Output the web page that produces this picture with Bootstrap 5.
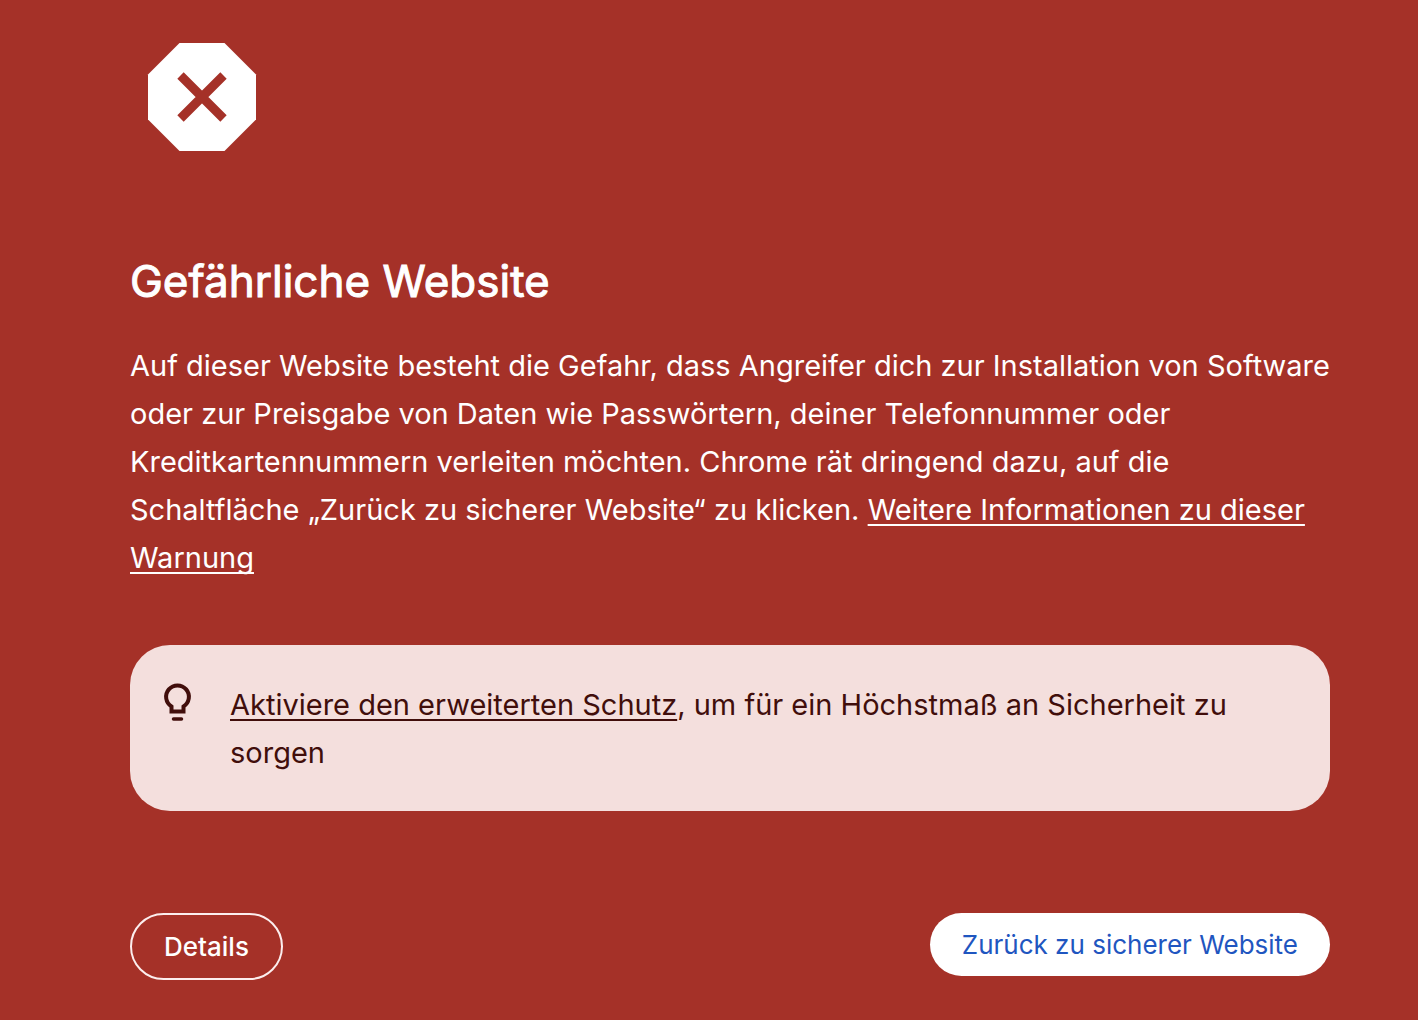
<!DOCTYPE html>
<html lang="de">
<head>
<meta charset="utf-8">
<meta name="viewport" content="width=device-width, initial-scale=1">
<title>Gefährliche Website</title>
<link href="https://cdn.jsdelivr.net/npm/bootstrap@5.3.0/dist/css/bootstrap.min.css" rel="stylesheet">
<style>
body { background: #a53128; color: #fff; font-family: Inter, "Liberation Sans", sans-serif; font-size: 29px; line-height: 48px; }
.warning-page { padding: 25px 88px 40px 130px; }
.stop-icon { width: 144px; height: 144px; }
.warning-title { font-size: 44px; line-height: 56px; font-weight: 400; margin: 84px 0 33px; -webkit-text-stroke: 1px; }
.warning-text { margin-bottom: 63px; }
.warning-page a { text-underline-offset: 4px; text-decoration-thickness: 2px; text-decoration-skip-ink: none; }
.tip-box { background: #f4dfdd; color: #410e0b; border-radius: 40px; padding: 36px 32px 34px; }
.tip-icon { width: 30px; height: 42px; margin-right: 38px; }
.actions { margin-top: 102px; }
.btn-round { border-radius: 40px; font-size: 26px; line-height: 31px; padding: 16px 32px; border: 0; }
.btn-details { border: 2px solid #fceeee; color: #fff; font-weight: 500; }
.btn-back, .btn-back:hover { background: #fff; color: #1f56c0; }
</style>
<script src="https://cdn.jsdelivr.net/npm/bootstrap@5.3.0/dist/js/bootstrap.bundle.min.js"></script>
</head>
<body>
<main class="warning-page">
<svg class="stop-icon d-block" viewBox="0 0 144 144" aria-hidden="true"><path fill="#fff" d="M49.500 18h45L126 49.500v45L94.500 126h-45L18 94.500v-45z"/><path d="m50.500 50.500 43 43m0-43-43 43" stroke="#a53128" stroke-width="9"/></svg>
<h1 class="warning-title">Gefährliche Website</h1>
<p class="warning-text">Auf dieser Website besteht die Gefahr, dass Angreifer dich zur Installation von Software oder zur Preisgabe von Daten wie Passwörtern, deiner Telefonnummer oder Kreditkartennummern verleiten möchten. Chrome rät dringend dazu, auf die Schaltfläche „Zurück zu sicherer Website“ zu klicken. <a class="text-reset" href="#">Weitere Informationen zu dieser Warnung</a></p>
<div class="tip-box d-flex align-items-start">
<svg class="tip-icon flex-shrink-0" viewBox="0 0 30 42" fill="none" stroke="#410e0b" stroke-width="4" aria-hidden="true"><path d="M9.500 30.500V25.500a11.400 11.400 0 1 1 12 0v5z"/><path d="M11.500 38h8" stroke-width="3.500" stroke-linecap="round"/></svg>
<p class="mb-0"><a class="text-reset" href="#">Aktiviere den erweiterten Schutz</a>, um für ein Höchstmaß an Sicherheit zu sorgen</p>
</div>
<div class="actions d-flex justify-content-between align-items-start">
<button type="button" class="btn btn-round btn-details">Details</button>
<button type="button" class="btn btn-round btn-back">Zurück zu sicherer Website</button>
</div>
</main>
</body>
</html>
